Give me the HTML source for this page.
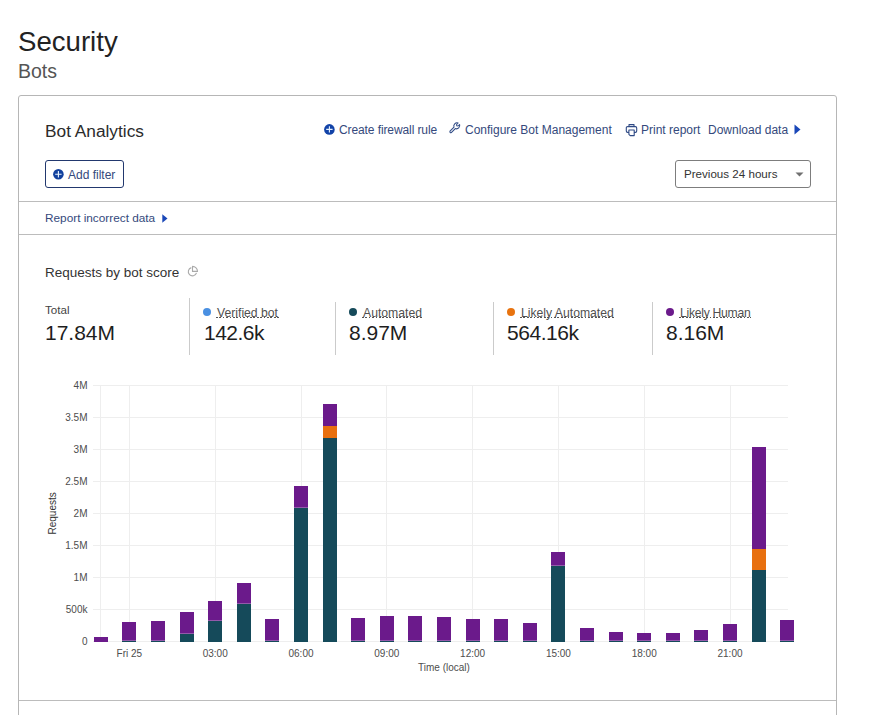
<!DOCTYPE html>
<html><head><meta charset="utf-8">
<style>
html,body{margin:0;padding:0;background:#fff;width:875px;height:715px;overflow:hidden;position:relative}
body{font-family:"Liberation Sans",sans-serif;color:#222}
.a{position:absolute;white-space:nowrap;line-height:1}
.card{position:absolute;left:18px;top:95px;width:817px;height:640px;border:1px solid #b6b6b6;border-radius:3px;box-sizing:content-box}
.hr{position:absolute;left:19px;width:817px;height:1px;background:#bcbcbc}
.lnk{color:#34497c;font-size:12px}
.vd{position:absolute;top:298px;width:1px;height:56px;background:#cbcbcb}
.dot{position:absolute;width:8px;height:8px;border-radius:50%;top:308px}
.lg{font-size:12.2px;color:#505050;line-height:1}
.lg::after{content:"";position:absolute;left:-1px;right:-1px;top:10px;height:1.7px;background:repeating-linear-gradient(90deg,#555 0 1.7px,transparent 1.7px 3.4px)}
.num{font-size:21px;color:#1e1e1e}
</style></head><body>
<div class="a" style="left:18px;top:28px;font-size:27.6px;color:#222">Security</div>
<div class="a" style="left:18px;top:61.5px;font-size:19.5px;color:#555">Bots</div>
<div class="card"></div>
<div class="hr" style="top:201px"></div>
<div class="hr" style="top:234px"></div>
<div class="hr" style="top:700px"></div>

<div class="a" style="left:45px;top:123.3px;font-size:17.3px;color:#2b2b2b">Bot Analytics</div>

<!-- header actions -->
<svg class="a" style="left:323px;top:123px" width="12" height="12" viewBox="0 0 12 12"><circle cx="6.4" cy="6.4" r="5.3" fill="#1243a8"/><path d="M6.4 3.2v6.4M3.2 6.4h6.4" stroke="#e8f4ff" stroke-width="1.1"/></svg>
<div class="a lnk" style="left:339px;top:123.6px;letter-spacing:-0.1px">Create firewall rule</div>
<svg class="a" style="left:448px;top:121px" width="13" height="13" viewBox="0 0 13 13"><path d="M2 10.2L6 6.2A3.3 3.3 0 0 1 10.1 1.9L8.6 3.5L8.8 4.8L10.1 5L11.6 3.5A3.3 3.3 0 0 1 7.3 7.6L3.3 11.6A1 1 0 0 1 2 10.2Z" fill="none" stroke="#2f4a85" stroke-width="1.05" stroke-linejoin="round"/></svg>
<div class="a lnk" style="left:465px;top:123.6px">Configure Bot Management</div>
<svg class="a" style="left:625px;top:123px" width="13" height="14" viewBox="0 0 13 14"><path d="M4 3.5V1.6h5v1.9M2.6 3.6h7.8a1.3 1.3 0 0 1 1.3 1.3v3.2a1.3 1.3 0 0 1-1.3 1.3H9.6M3.6 9.4H2.6A1.3 1.3 0 0 1 1.3 8.1V4.9a1.3 1.3 0 0 1 1.3-1.3M3.9 7h5.3v5.6H5.2L3.9 11.3z" fill="none" stroke="#2f4a85" stroke-width="1.1" stroke-linejoin="round"/></svg>
<div class="a lnk" style="left:641px;top:123.6px">Print report</div>
<div class="a lnk" style="left:708px;top:123.6px">Download data</div>
<svg class="a" style="left:794px;top:124px" width="7" height="11" viewBox="0 0 7 11"><path d="M0.5 0.5L6.5 5.5L0.5 10.5z" fill="#1a47b8"/></svg>

<!-- add filter -->
<div class="a" style="left:45px;top:160px;width:77px;height:26px;border:1px solid #22386e;border-radius:3px"></div>
<svg class="a" style="left:52px;top:168px" width="13" height="13" viewBox="0 0 13 13"><circle cx="6.4" cy="6.3" r="5.3" fill="#12419e"/><path d="M6.4 3.1v6.4M3.2 6.3h6.4" stroke="#e8f4ff" stroke-width="1.1"/></svg>
<div class="a lnk" style="left:68px;top:168.6px">Add filter</div>

<!-- select -->
<div class="a" style="left:675px;top:160px;width:134px;height:26px;border:1px solid #7d7d7d;border-radius:3px"></div>
<div class="a" style="left:684px;top:167.8px;font-size:11.6px;color:#333">Previous 24 hours</div>
<svg class="a" style="left:795px;top:172px" width="9" height="5" viewBox="0 0 9 5"><path d="M0.5 0.5h8L4.5 4.5z" fill="#707070"/></svg>

<!-- report incorrect -->
<div class="a lnk" style="left:45px;top:213px;font-size:11.8px">Report incorrect data</div>
<svg class="a" style="left:162px;top:214px" width="6" height="9" viewBox="0 0 6 9"><path d="M0.3 0.3L5.5 4.5L0.3 8.7z" fill="#1a47b8"/></svg>

<!-- section title -->
<div class="a" style="left:45px;top:265.5px;font-size:13.5px;color:#333">Requests by bot score</div>
<svg class="a" style="left:187px;top:265px" width="12" height="12" viewBox="0 0 12 12"><path d="M4.3 2.6A4.2 4.2 0 1 0 9.5 7.9" fill="none" stroke="#aaa" stroke-width="1.1"/><path d="M5.5 1.4V6.4H10.5A5 5 0 0 0 5.5 1.4Z" fill="none" stroke="#aaa" stroke-width="1.1" stroke-linejoin="round"/></svg>

<!-- stats -->
<div class="a" style="left:45px;top:304px;font-size:11.6px;color:#444">Total</div>
<div class="a num" style="left:45px;top:321.5px">17.84M</div>
<div class="vd" style="left:189px;top:298px;height:57px"></div>
<div class="dot" style="left:203px;background:#4a90e2"></div>
<div class="a lg" style="left:217px;top:306.5px">Verified bot</div>
<div class="a num" style="left:204px;top:322px;letter-spacing:-0.5px">142.6k</div>
<div class="vd" style="left:335px;top:302px;height:53px"></div>
<div class="dot" style="left:349px;background:#154a5a"></div>
<div class="a lg" style="left:363px;top:306.5px">Automated</div>
<div class="a num" style="left:349px;top:321.5px">8.97M</div>
<div class="vd" style="left:493px;top:302px;height:53px"></div>
<div class="dot" style="left:507px;background:#e8730f"></div>
<div class="a lg" style="left:521px;top:306.5px">Likely Automated</div>
<div class="a num" style="left:507px;top:322px;letter-spacing:-0.45px">564.16k</div>
<div class="vd" style="left:652px;top:302px;height:53px"></div>
<div class="dot" style="left:666px;background:#6b1a8b"></div>
<div class="a lg" style="left:680px;top:306.5px;letter-spacing:-0.28px">Likely Human</div>
<div class="a num" style="left:666px;top:321.5px">8.16M</div>

<svg style="position:absolute;left:0;top:0" width="875" height="715" font-family="Liberation Sans, sans-serif"><line x1="93" y1="385.5" x2="788" y2="385.5" stroke="#eeeeee" stroke-width="1"/><line x1="93" y1="417.5" x2="788" y2="417.5" stroke="#eeeeee" stroke-width="1"/><line x1="93" y1="449.5" x2="788" y2="449.5" stroke="#eeeeee" stroke-width="1"/><line x1="93" y1="481.5" x2="788" y2="481.5" stroke="#eeeeee" stroke-width="1"/><line x1="93" y1="513.5" x2="788" y2="513.5" stroke="#eeeeee" stroke-width="1"/><line x1="93" y1="545.5" x2="788" y2="545.5" stroke="#eeeeee" stroke-width="1"/><line x1="93" y1="577.5" x2="788" y2="577.5" stroke="#eeeeee" stroke-width="1"/><line x1="93" y1="609.5" x2="788" y2="609.5" stroke="#eeeeee" stroke-width="1"/><line x1="93" y1="641.5" x2="788" y2="641.5" stroke="#eeeeee" stroke-width="1"/><line x1="100.5" y1="385" x2="100.5" y2="642" stroke="#eeeeee" stroke-width="1"/><line x1="129.5" y1="385" x2="129.5" y2="642" stroke="#eeeeee" stroke-width="1"/><line x1="215.5" y1="385" x2="215.5" y2="642" stroke="#eeeeee" stroke-width="1"/><line x1="301.5" y1="385" x2="301.5" y2="642" stroke="#eeeeee" stroke-width="1"/><line x1="386.5" y1="385" x2="386.5" y2="642" stroke="#eeeeee" stroke-width="1"/><line x1="472.5" y1="385" x2="472.5" y2="642" stroke="#eeeeee" stroke-width="1"/><line x1="558.5" y1="385" x2="558.5" y2="642" stroke="#eeeeee" stroke-width="1"/><line x1="644.5" y1="385" x2="644.5" y2="642" stroke="#eeeeee" stroke-width="1"/><line x1="730.5" y1="385" x2="730.5" y2="642" stroke="#eeeeee" stroke-width="1"/><text x="87.5" y="389.1" text-anchor="end" font-size="10" fill="#4d4d4d">4M</text><text x="87.5" y="421.1" text-anchor="end" font-size="10" fill="#4d4d4d">3.5M</text><text x="87.5" y="453.1" text-anchor="end" font-size="10" fill="#4d4d4d">3M</text><text x="87.5" y="485.1" text-anchor="end" font-size="10" fill="#4d4d4d">2.5M</text><text x="87.5" y="517.1" text-anchor="end" font-size="10" fill="#4d4d4d">2M</text><text x="87.5" y="549.1" text-anchor="end" font-size="10" fill="#4d4d4d">1.5M</text><text x="87.5" y="581.1" text-anchor="end" font-size="10" fill="#4d4d4d">1M</text><text x="87.5" y="613.1" text-anchor="end" font-size="10" fill="#4d4d4d">500k</text><text x="87.5" y="645.1" text-anchor="end" font-size="10" fill="#4d4d4d">0</text><text x="129.4" y="657" text-anchor="middle" font-size="10" fill="#4d4d4d">Fri 25</text><text x="215.2" y="657" text-anchor="middle" font-size="10" fill="#4d4d4d">03:00</text><text x="301.0" y="657" text-anchor="middle" font-size="10" fill="#4d4d4d">06:00</text><text x="386.8" y="657" text-anchor="middle" font-size="10" fill="#4d4d4d">09:00</text><text x="472.6" y="657" text-anchor="middle" font-size="10" fill="#4d4d4d">12:00</text><text x="558.4" y="657" text-anchor="middle" font-size="10" fill="#4d4d4d">15:00</text><text x="644.2" y="657" text-anchor="middle" font-size="10" fill="#4d4d4d">18:00</text><text x="730.0" y="657" text-anchor="middle" font-size="10" fill="#4d4d4d">21:00</text><text x="444" y="671" text-anchor="middle" font-size="10" fill="#4d4d4d">Time (local)</text><text transform="translate(56.2,513.4) rotate(-90)" text-anchor="middle" font-size="10" fill="#333">Requests</text><rect x="94" y="637.0" width="14" height="5.0" fill="#6b1a8b"/><rect x="94" y="642.0" width="14" height="0.0" fill="#154a5a"/><rect x="122" y="622.0" width="14" height="20.0" fill="#6b1a8b"/><rect x="122" y="641.0" width="14" height="1.0" fill="#154a5a"/><rect x="122" y="640.0" width="14" height="1" fill="#fff" fill-opacity="0.28"/><rect x="151" y="621.0" width="14" height="21.0" fill="#6b1a8b"/><rect x="151" y="641.0" width="14" height="1.0" fill="#154a5a"/><rect x="151" y="640.0" width="14" height="1" fill="#fff" fill-opacity="0.28"/><rect x="180" y="612.0" width="14" height="30.0" fill="#6b1a8b"/><rect x="180" y="634.0" width="14" height="8.0" fill="#154a5a"/><rect x="180" y="633.0" width="14" height="1" fill="#fff" fill-opacity="0.28"/><rect x="208" y="601.0" width="14" height="41.0" fill="#6b1a8b"/><rect x="208" y="621.0" width="14" height="21.0" fill="#154a5a"/><rect x="208" y="620.0" width="14" height="1" fill="#fff" fill-opacity="0.28"/><rect x="237" y="583.0" width="14" height="59.0" fill="#6b1a8b"/><rect x="237" y="604.0" width="14" height="38.0" fill="#154a5a"/><rect x="237" y="603.0" width="14" height="1" fill="#fff" fill-opacity="0.28"/><rect x="265" y="619.0" width="14" height="23.0" fill="#6b1a8b"/><rect x="265" y="641.0" width="14" height="1.0" fill="#154a5a"/><rect x="265" y="640.0" width="14" height="1" fill="#fff" fill-opacity="0.28"/><rect x="294" y="486.0" width="14" height="156.0" fill="#6b1a8b"/><rect x="294" y="508.0" width="14" height="134.0" fill="#154a5a"/><rect x="294" y="507.0" width="14" height="1" fill="#fff" fill-opacity="0.28"/><rect x="323" y="404.0" width="14" height="238.0" fill="#6b1a8b"/><rect x="323" y="426.0" width="14" height="216.0" fill="#e8700f"/><rect x="323" y="438.0" width="14" height="204.0" fill="#154a5a"/><rect x="351" y="618.0" width="14" height="24.0" fill="#6b1a8b"/><rect x="351" y="641.0" width="14" height="1.0" fill="#154a5a"/><rect x="351" y="640.0" width="14" height="1" fill="#fff" fill-opacity="0.28"/><rect x="380" y="616.0" width="14" height="26.0" fill="#6b1a8b"/><rect x="380" y="641.0" width="14" height="1.0" fill="#154a5a"/><rect x="380" y="640.0" width="14" height="1" fill="#fff" fill-opacity="0.28"/><rect x="408" y="616.0" width="14" height="26.0" fill="#6b1a8b"/><rect x="408" y="641.0" width="14" height="1.0" fill="#154a5a"/><rect x="408" y="640.0" width="14" height="1" fill="#fff" fill-opacity="0.28"/><rect x="437" y="617.0" width="14" height="25.0" fill="#6b1a8b"/><rect x="437" y="641.0" width="14" height="1.0" fill="#154a5a"/><rect x="437" y="640.0" width="14" height="1" fill="#fff" fill-opacity="0.28"/><rect x="466" y="619.0" width="14" height="23.0" fill="#6b1a8b"/><rect x="466" y="641.0" width="14" height="1.0" fill="#154a5a"/><rect x="466" y="640.0" width="14" height="1" fill="#fff" fill-opacity="0.28"/><rect x="494" y="619.0" width="14" height="23.0" fill="#6b1a8b"/><rect x="494" y="641.0" width="14" height="1.0" fill="#154a5a"/><rect x="494" y="640.0" width="14" height="1" fill="#fff" fill-opacity="0.28"/><rect x="523" y="623.0" width="14" height="19.0" fill="#6b1a8b"/><rect x="523" y="641.0" width="14" height="1.0" fill="#154a5a"/><rect x="523" y="640.0" width="14" height="1" fill="#fff" fill-opacity="0.28"/><rect x="551" y="552.0" width="14" height="90.0" fill="#6b1a8b"/><rect x="551" y="566.0" width="14" height="76.0" fill="#154a5a"/><rect x="551" y="565.0" width="14" height="1" fill="#fff" fill-opacity="0.28"/><rect x="580" y="628.0" width="14" height="14.0" fill="#6b1a8b"/><rect x="580" y="641.0" width="14" height="1.0" fill="#154a5a"/><rect x="580" y="640.0" width="14" height="1" fill="#fff" fill-opacity="0.28"/><rect x="609" y="632.0" width="14" height="10.0" fill="#6b1a8b"/><rect x="609" y="641.0" width="14" height="1.0" fill="#154a5a"/><rect x="609" y="640.0" width="14" height="1" fill="#fff" fill-opacity="0.28"/><rect x="637" y="633.0" width="14" height="9.0" fill="#6b1a8b"/><rect x="637" y="641.0" width="14" height="1.0" fill="#154a5a"/><rect x="637" y="640.0" width="14" height="1" fill="#fff" fill-opacity="0.28"/><rect x="666" y="633.0" width="14" height="9.0" fill="#6b1a8b"/><rect x="666" y="641.0" width="14" height="1.0" fill="#154a5a"/><rect x="666" y="640.0" width="14" height="1" fill="#fff" fill-opacity="0.28"/><rect x="694" y="630.0" width="14" height="12.0" fill="#6b1a8b"/><rect x="694" y="641.0" width="14" height="1.0" fill="#154a5a"/><rect x="694" y="640.0" width="14" height="1" fill="#fff" fill-opacity="0.28"/><rect x="723" y="624.0" width="14" height="18.0" fill="#6b1a8b"/><rect x="723" y="641.0" width="14" height="1.0" fill="#154a5a"/><rect x="723" y="640.0" width="14" height="1" fill="#fff" fill-opacity="0.28"/><rect x="752" y="447.0" width="14" height="195.0" fill="#6b1a8b"/><rect x="752" y="549.0" width="14" height="93.0" fill="#e8700f"/><rect x="752" y="570.0" width="14" height="72.0" fill="#154a5a"/><rect x="780" y="620.0" width="14" height="22.0" fill="#6b1a8b"/><rect x="780" y="641.0" width="14" height="1.0" fill="#154a5a"/><rect x="780" y="640.0" width="14" height="1" fill="#fff" fill-opacity="0.28"/></svg>
</body></html>
